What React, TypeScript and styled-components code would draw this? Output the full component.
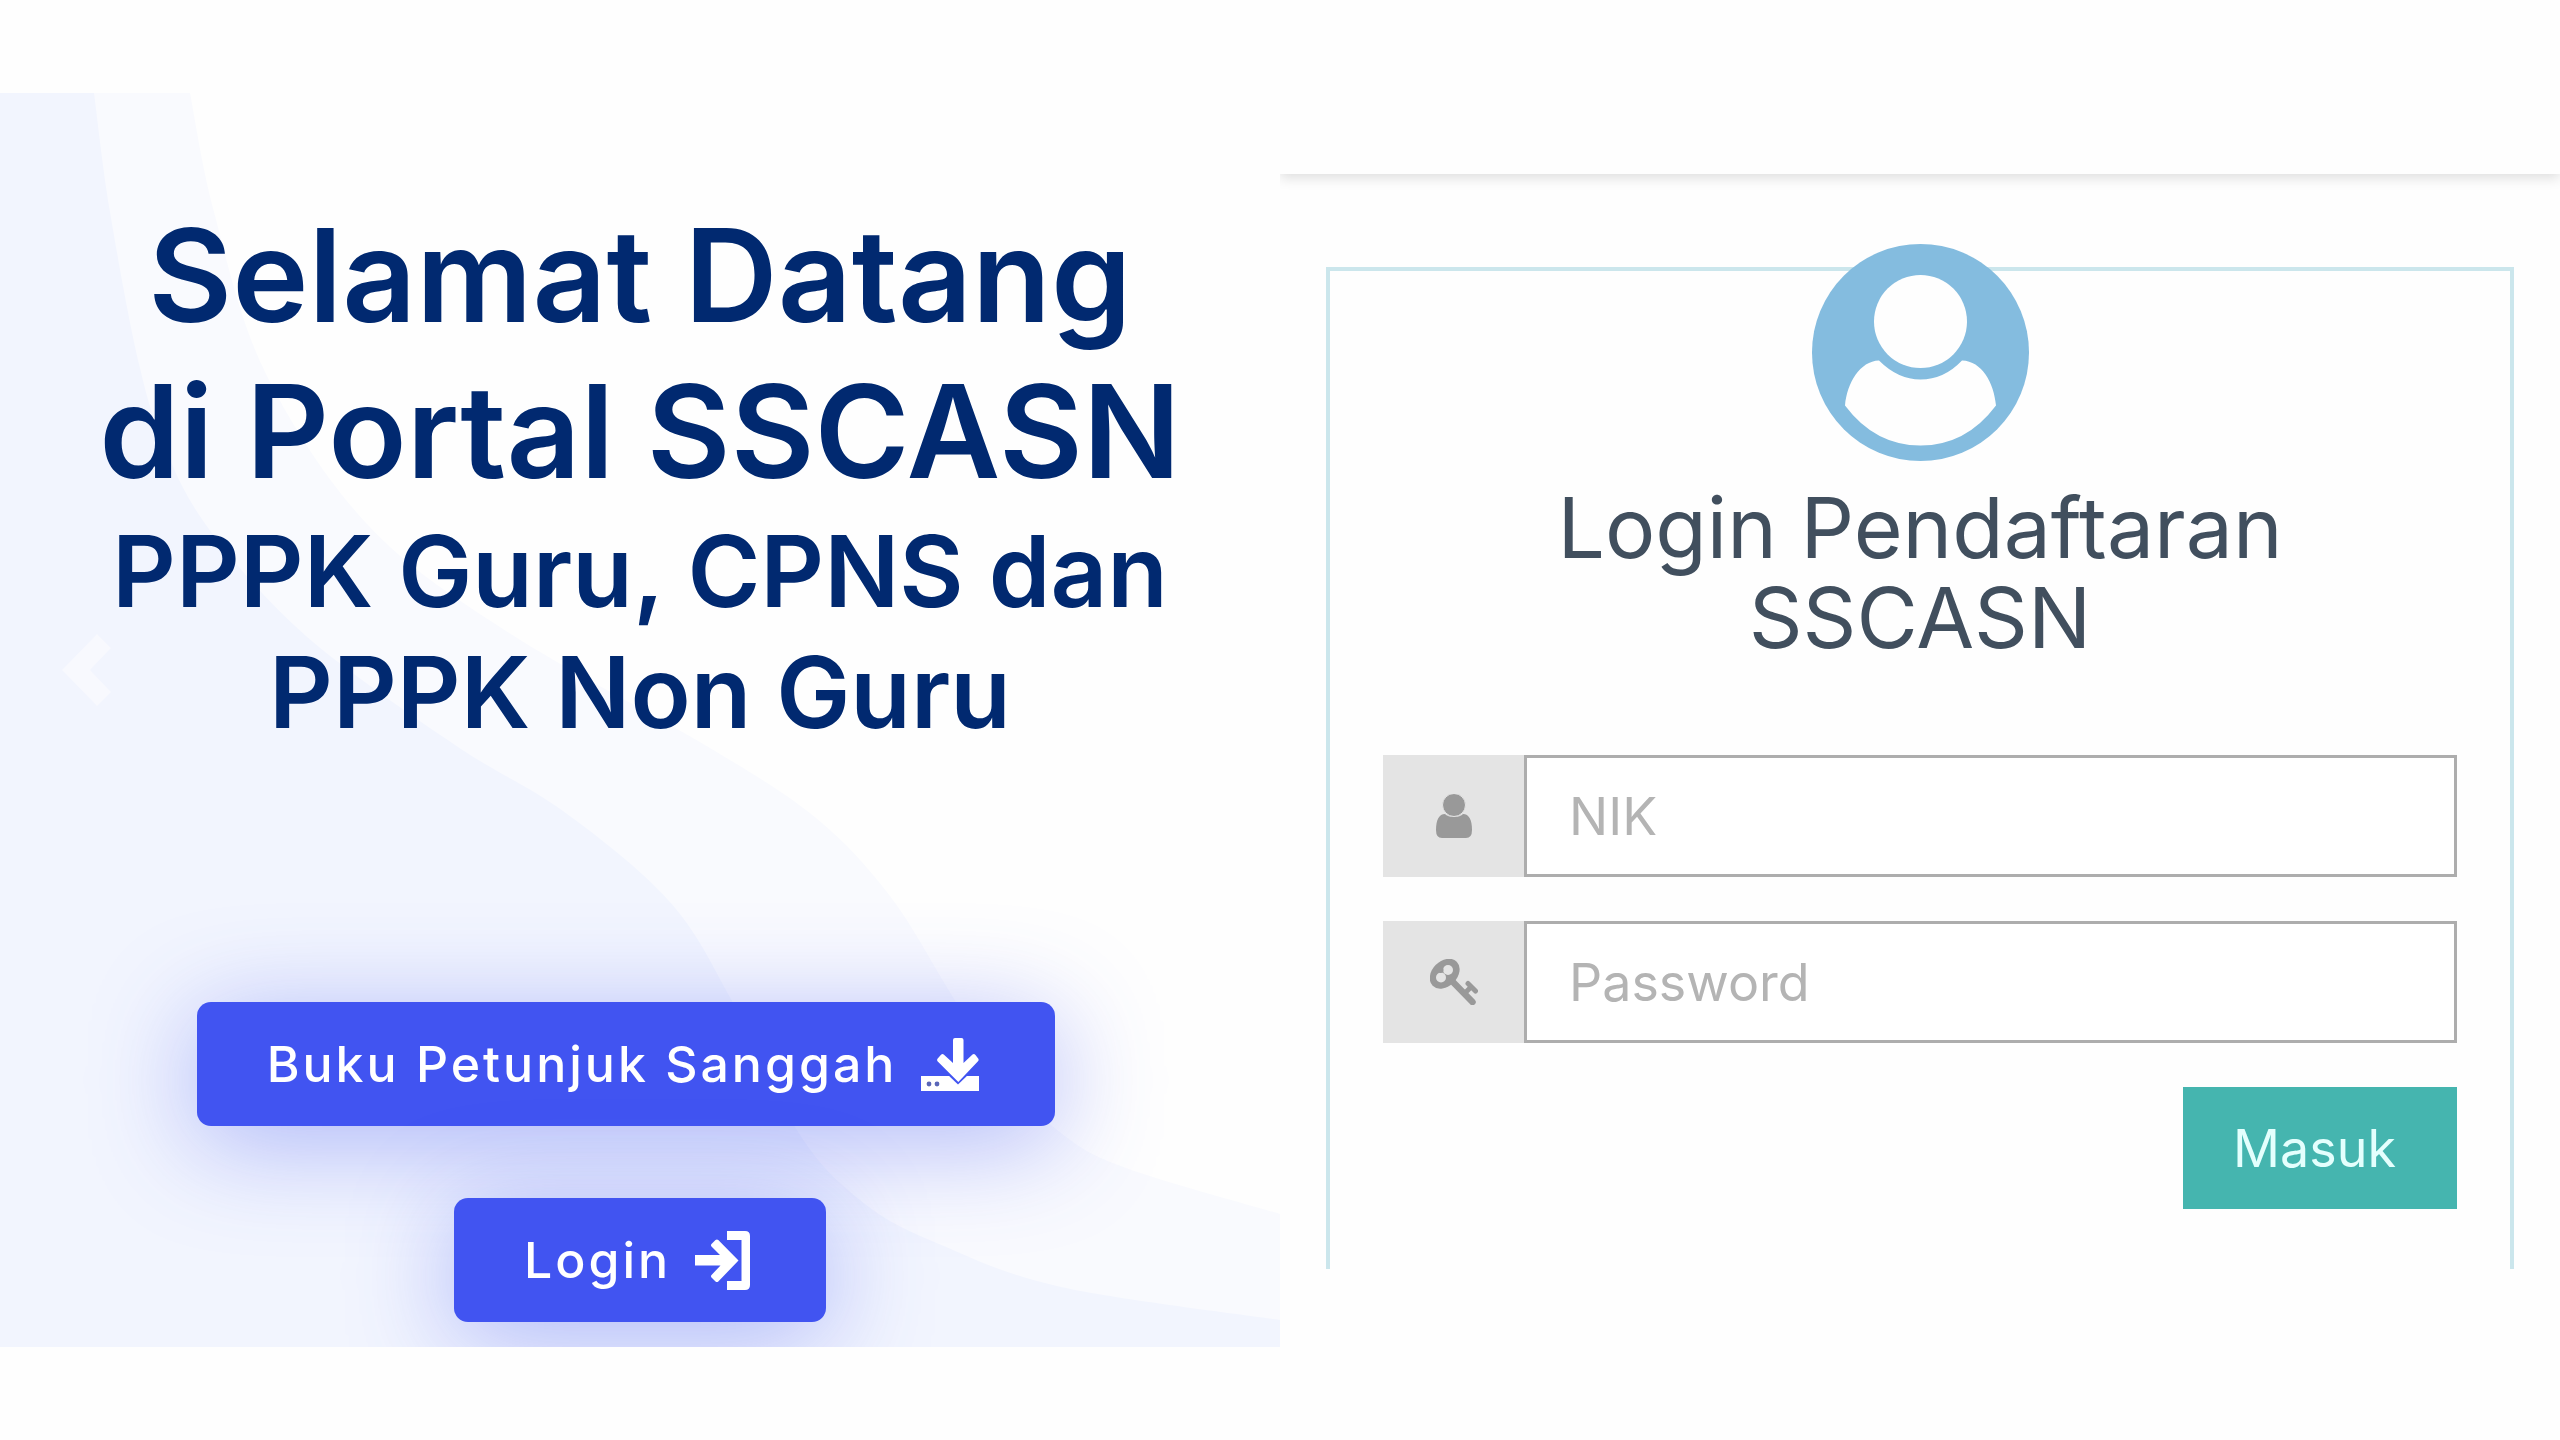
import React from "react";
import styled, { createGlobalStyle } from "styled-components";

const GlobalStyle = createGlobalStyle`
  *, *::before, *::after { box-sizing: border-box; }
  body {
    margin: 0;
    background: #fefefe;
    font-family: Inter, "Liberation Sans", sans-serif;
  }
`;

const Page = styled.main`
  display: grid;
  grid-template-columns: 1fr 1fr;
  min-height: 100vh;
  padding: 93px 0;
`;

/* ---------- Hero ---------- */

const Hero = styled.section`
  position: relative;
  overflow: hidden;
  padding-top: 104px;
  text-align: center;
  color: #012970;
`;

const Waves = styled.svg`
  position: absolute;
  inset: 0;
  width: 100%;
  height: 100%;
`;

const HeroContent = styled.div`
  position: relative;
  display: flex;
  flex-direction: column;
  align-items: center;
  gap: 2px;
`;

const HeroTitle = styled.h1`
  margin: 0;
  font-size: 129px;
  font-weight: 600;
  line-height: 156px;
`;

const HeroSubtitle = styled.h2`
  margin: 0;
  font-size: 99px;
  font-weight: 600;
  line-height: 121px;
`;

const Actions = styled.div`
  display: flex;
  flex-direction: column;
  align-items: center;
  gap: 72px;
  margin-top: 247px;
`;

const ActionLink = styled.a<{ $gapEnd?: boolean }>`
  display: flex;
  align-items: center;
  gap: 24px;
  height: 124px;
  padding: 0 76px 0 70px;
  margin-right: ${(p) => (p.$gapEnd ? "28px" : "0")};
  border-radius: 14px;
  background: #4154f1;
  box-shadow: 0 16px 104px rgba(65, 84, 241, 0.4);
  color: #fff;
  font-size: 50px;
  font-weight: 500;
  letter-spacing: 3px;
  text-decoration: none;
`;

const PrevButton = styled.button`
  position: absolute;
  top: 46%;
  left: 62px;
  transform: translateY(-50%);
  display: flex;
  padding: 0;
  border: 0;
  background: none;
  cursor: pointer;
`;

/* ---------- Login ---------- */

const LoginPane = styled.section`
  overflow: hidden;
`;

const TopBar = styled.div`
  height: 81px;
  box-shadow: 0 4px 12px rgba(0, 0, 0, 0.13);
`;

const Card = styled.form`
  display: flex;
  flex-direction: column;
  align-items: center;
  margin: 93px 46px 0;
  padding: 0 53px 60px;
  border: 4px solid #cbe6ec;
  border-bottom: 0;
`;

const Avatar = styled.svg`
  width: 217px;
  height: 217px;
  margin-top: -27px;
`;

const CardTitle = styled.h2`
  margin: 22px 0 92px;
  color: #414f5e;
  font-size: 84px;
  font-weight: 400;
  line-height: 90px;
  text-align: center;
`;

const Fields = styled.div`
  display: flex;
  flex-direction: column;
  gap: 44px;
  width: 100%;
`;

const Field = styled.div`
  display: flex;
  height: 122px;
`;

const FieldIcon = styled.label`
  display: flex;
  align-items: center;
  justify-content: center;
  width: 141px;
  background: #e4e4e4;
`;

const FieldInput = styled.input`
  flex: 1;
  min-width: 0;
  padding: 0 42px;
  border: 3px solid #adadad;
  border-radius: 0;
  background: #fff;
  color: #414f5e;
  font-family: inherit;
  font-size: 52px;
  &::placeholder {
    color: #b4b4b4;
    opacity: 1;
  }
`;

const SubmitButton = styled.button`
  align-self: flex-end;
  height: 122px;
  padding: 0 61px 0 50px;
  border: 0;
  background: #45b5af;
  color: #e4fffd;
  font-family: inherit;
  font-size: 52px;
  cursor: pointer;
`;

/* ---------- Drawings ---------- */

type Point = [number, number];

const outerWave: Point[] = [
  [190, 0], [214, 119], [265, 279], [367, 431], [506, 538], [710, 655], [816, 725],
  [890, 803], [951, 901], [999, 978], [1061, 1040], [1126, 1075], [1280, 1121],
];
const innerWave: Point[] = [
  [94, 0], [110, 119], [139, 271], [167, 360], [212, 440], [306, 543], [455, 652], [563, 718],
  [669, 808], [731, 906], [800, 1042], [865, 1111], [939, 1151], [1061, 1194], [1280, 1227],
];

/* Smooth curve through the points, closed along the left and bottom edges. */
function wavePath(points: Point[]): string {
  let d = `M0 0L${points[0].join(" ")}`;
  for (let i = 0; i < points.length - 1; i++) {
    const a = points[Math.max(i - 1, 0)];
    const b = points[i];
    const c = points[i + 1];
    const e = points[Math.min(i + 2, points.length - 1)];
    d += `C${b[0] + (c[0] - a[0]) / 6} ${b[1] + (c[1] - a[1]) / 6} ${c[0] - (e[0] - b[0]) / 6} ${
      c[1] - (e[1] - b[1]) / 6
    } ${c[0]} ${c[1]}`;
  }
  return `${d}V1254H0Z`;
}

const DownloadIcon = () => (
  <svg width="58" height="53" viewBox="0 0 58 53" aria-hidden="true">
    <path d="M0 38H58V53H0Z" fill="#fff" />
    <circle cx="8" cy="46" r="2.4" fill="#5a66b8" />
    <circle cx="16" cy="46" r="2.4" fill="#5a66b8" />
    <path d="M26 36L37 46.5L48 36Z" fill="#4154f1" />
    <path
      d="M32 2Q32 0 34 0H40.500Q42.500 0 42.500 2V25L51.500 16.500Q53 15.300 54.500 17L57.500 21Q58 22.300 57 23.300L37.300 44L16.500 23.300Q15.500 22 16.500 20.700L20 16.800Q21.500 15.500 23 16.700L32 25Z"
      fill="#fff"
    />
  </svg>
);

const LoginIcon = () => (
  <svg width="55" height="59" viewBox="0 0 55 59" aria-hidden="true">
    <path d="M32 0H50Q55 0 55 5V54Q55 59 50 59H32V50H46.500V9H32Z" fill="#fff" />
    <path
      d="M0 24H25L16.500 15.500Q15.500 14 16.500 13L20.500 9Q22 8 23.300 9L43.500 29.500L23.300 50.500Q22 51.500 20.500 50.500L16.500 46.500Q15.500 45 16.500 44L25.500 34.500H0Z"
      fill="#fff"
    />
  </svg>
);

const ChevronIcon = () => (
  <svg width="50" height="72" viewBox="0 0 50 72" aria-hidden="true">
    <path d="M35 0L49 14L28 36L49 58L35 72L0 36Z" fill="#f8f9fe" />
  </svg>
);

const AvatarIcon = () => (
  <Avatar viewBox="0 0 217 217" aria-hidden="true">
    <circle cx="108.500" cy="108.500" r="108.500" fill="#84bcdf" />
    <circle cx="108.500" cy="77.500" r="46.500" fill="#fefefe" />
    <path
      d="M67 116.500Q86 135.500 108.500 135.500Q132 135.500 150 116.500C170 117 182 139 184 161.500Q154 201.500 108.500 201.500Q63 201.500 33 161.500C35 139 48 117 67 116.500Z"
      fill="#fefefe"
    />
  </Avatar>
);

const UserIcon = () => (
  <svg width="36" height="44" viewBox="0 0 36 44" aria-hidden="true">
    <path
      d="M9 20C12 24 24 24 27 20C33 20 36 26 36 36Q36 44 30 44H6Q0 44 0 36C0 26 3 20 9 20Z"
      fill="#999"
    />
    <circle cx="18" cy="11" r="11.500" fill="#999" stroke="#e4e4e4" strokeWidth="1" />
  </svg>
);

const KeyIcon = () => (
  <svg width="48" height="46" viewBox="0 0 48 46" aria-hidden="true">
    <g fill="none" stroke="#999" strokeLinecap="round">
      <path d="M21 21L42.500 43" strokeWidth="6.500" />
      <path d="M35 34L41 28" strokeWidth="5" strokeLinecap="butt" />
      <path d="M38 24.500L45.500 32" strokeWidth="5" />
    </g>
    <ellipse cx="14.700" cy="14.700" rx="17" ry="12.500" fill="#999" transform="rotate(-45 14.700 14.700)" />
    <circle cx="18" cy="11" r="5" fill="#e4e4e4" />
    <circle cx="11" cy="18.500" r="5" fill="#e4e4e4" />
    <circle cx="10.500" cy="11" r="3" fill="#999" />
  </svg>
);

export default function App() {
  return (
    <>
      <GlobalStyle />
      <Page>
        <Hero>
          <Waves viewBox="0 0 1280 1254" preserveAspectRatio="none" aria-hidden="true">
            <path d={wavePath(outerWave)} fill="#f9fafe" />
            <path d={wavePath(innerWave)} fill="#f2f5fe" />
          </Waves>
          <HeroContent>
            <HeroTitle>
              Selamat Datang
              <br />
              di Portal SSCASN
            </HeroTitle>
            <HeroSubtitle>
              PPPK Guru, CPNS dan
              <br />
              PPPK Non Guru
            </HeroSubtitle>
            <Actions>
              <ActionLink href="#buku" $gapEnd>
                <span>Buku Petunjuk Sanggah</span>
                <DownloadIcon />
              </ActionLink>
              <ActionLink href="#login">
                <span>Login</span>
                <LoginIcon />
              </ActionLink>
            </Actions>
          </HeroContent>
          <PrevButton type="button" aria-label="Sebelumnya">
            <ChevronIcon />
          </PrevButton>
        </Hero>

        <LoginPane>
          <TopBar />
          <Card onSubmit={(e) => e.preventDefault()}>
            <AvatarIcon />
            <CardTitle>
              Login Pendaftaran
              <br />
              SSCASN
            </CardTitle>
            <Fields>
              <Field>
                <FieldIcon htmlFor="nik" aria-label="NIK">
                  <UserIcon />
                </FieldIcon>
                <FieldInput id="nik" type="text" placeholder="NIK" />
              </Field>
              <Field>
                <FieldIcon htmlFor="password" aria-label="Password">
                  <KeyIcon />
                </FieldIcon>
                <FieldInput id="password" type="password" placeholder="Password" />
              </Field>
              <SubmitButton type="submit">Masuk</SubmitButton>
            </Fields>
          </Card>
        </LoginPane>
      </Page>
    </>
  );
}
